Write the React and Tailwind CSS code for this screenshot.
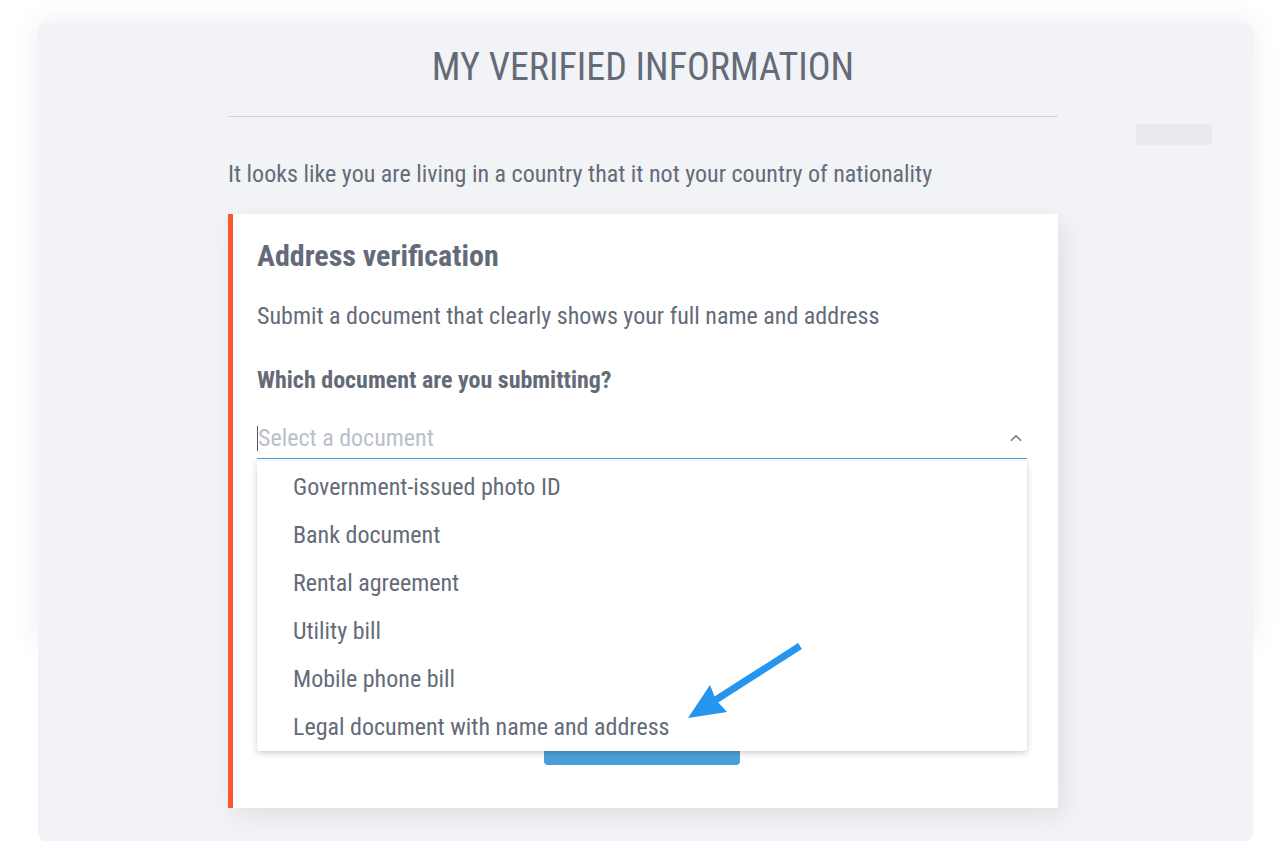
import { ChevronUp } from 'lucide-react';

const OPTIONS = [
  'Government-issued photo ID',
  'Bank document',
  'Rental agreement',
  'Utility bill',
  'Mobile phone bill',
  'Legal document with name and address',
];

const App = () => {
  return (
    <div
      className="relative min-h-[859px] bg-white pt-[23px] text-[#646b78] font-stretch-condensed"
      style={{ fontFamily: '"Roboto Condensed", Roboto, "Liberation Sans", sans-serif' }}
    >
      {/* Panel */}
      <div className="relative ml-[38px] w-[1215px] h-[818px]">
        {/* shadow only on the upper part */}
        <div className="absolute left-0 top-0 w-full h-[618px] rounded-t-lg shadow-[0_0_30px_rgba(0,0,0,0.08)]" />
        <div className="relative h-full rounded-lg bg-[#f2f3f7]">
          <div className="absolute left-[1098px] top-[101px] w-[76px] h-[21px] bg-[#e9eaee]" />

          <div className="ml-[190px] w-[830px] pt-[22px]">
            <h1 className="text-center text-[38px] leading-[44px] uppercase">My verified information</h1>
            <div className="mt-[27px] h-px bg-[#d2d4db]" />
            <p className="mt-[43px] text-[24px] leading-[28px]">
              It looks like you are living in a country that it not your country of nationality
            </p>

            {/* Card */}
            <div className="mt-[26px] h-[594px] flex bg-white shadow-[6px_8px_24px_rgba(0,0,0,0.08)]">
              <div className="w-[5px] bg-[#fe5430]" />
              <div className="flex-1 pl-[24px] pr-[31px] pt-[24px]">
                <h2 className="text-[30px] leading-[36px] font-bold">Address verification</h2>
                <p className="mt-[28px] text-[24px] leading-[28px]">
                  Submit a document that clearly shows your full name and address
                </p>
                <p className="mt-[36px] text-[24px] leading-[28px] font-bold">Which document are you submitting?</p>

                <div className="relative mt-[27px]">
                  <div className="flex items-center h-[37px] pb-[3px]">
                    <span className="w-px h-[25px] bg-[#4b5563]" />
                    <span className="flex-1 text-[24px] leading-[28px] text-[#b9c0cc]">Select a document</span>
                    <ChevronUp className="w-[18px] h-[18px] mr-[2px] text-[#6b7280]" strokeWidth={2} />
                  </div>
                  <div className="h-px bg-[#4aa3df]" />

                  {/* button hidden under the menu */}
                  <div className="mt-[292px] ml-[287px] w-[196px] h-[14px] rounded-b-sm bg-[#4a9fd8]" />

                  {/* menu */}
                  <div className="absolute left-0 right-0 top-[40px] pt-[2px] rounded-b-[3px] bg-white shadow-[0_2px_6px_rgba(0,0,0,0.2)]">
                    {OPTIONS.map((o) => (
                      <div key={o} className="h-[48px] flex items-center pl-[36px] text-[24px] leading-[28px]">
                        {o}
                      </div>
                    ))}
                  </div>
                </div>
              </div>
            </div>
          </div>
        </div>
      </div>

      {/* annotation arrow */}
      <svg className="absolute left-[680px] top-[635px]" width="130" height="95" viewBox="0 0 130 95">
        <line x1="120" y1="11" x2="34" y2="66" stroke="#2595ee" strokeWidth="7" strokeLinecap="butt" />
        <polygon points="8,83 30,50 36,65 47,77" fill="#2595ee" />
      </svg>
    </div>
  );
};

export default App;
